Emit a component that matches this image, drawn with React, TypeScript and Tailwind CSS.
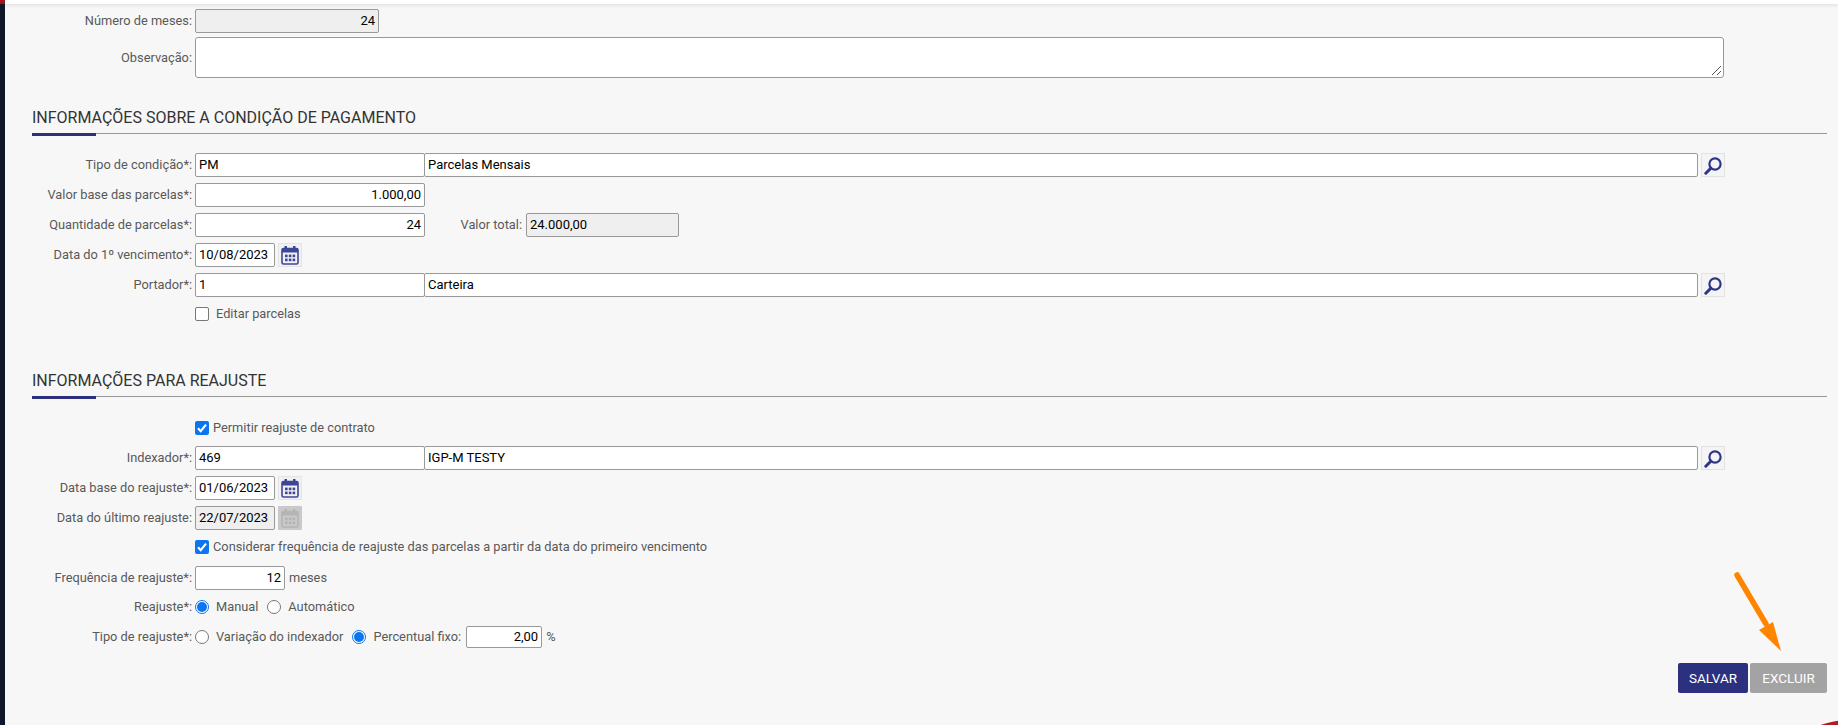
import React from "react";

const field = "border border-[#999] rounded-[2px] px-[3px] text-[13px] leading-[22px] text-black flex items-center shrink-0";
const on = field + " h-[24px] bg-white";
const off = field + " h-[24px] bg-[#efefef]";

function CalIcon({ disabled }: { disabled?: boolean }) {
  const c = disabled ? "#b4b4b4" : "#3f4697";
  return (
    <span className={disabled ? "ml-[3px] w-[24px] h-[24px] bg-[#c9c9c9] rounded-[1px] flex items-center justify-center shrink-0" : "ml-[3px] w-[24px] h-[24px] bg-[#f1f1f4] border border-[#e4e4e4] flex items-center justify-center shrink-0"}>
      <svg width="18" height="19" viewBox="0 0 18 19">
        <rect x="3.5" y="0" width="2.5" height="4" fill={c} />
        <rect x="12" y="0" width="2.5" height="4" fill={c} />
        <rect x="1" y="2.5" width="16" height="15.5" rx="1.5" fill="none" stroke={c} strokeWidth="1.6" />
        <rect x="1" y="2.5" width="16" height="4" fill={c} />
        {[4, 7.8, 11.6].map((x) =>
          [8.6, 12.6].map((y) => <rect key={x + "-" + y} x={x} y={y} width="2.6" height="2.6" fill={c} />)
        )}
      </svg>
    </span>
  );
}

function SearchIcon() {
  return (
    <span className="ml-[3px] w-[24px] h-[24px] bg-[#f4f4f6] border border-[#e2e2e2] flex items-center justify-center shrink-0">
      <svg width="20" height="20" viewBox="0 0 20 20" fill="none">
        <circle cx="12" cy="9" r="5.6" stroke="#2e3586" strokeWidth="2.2" />
        <path d="M7.8 13.2 L2.8 18.2" stroke="#2e3586" strokeWidth="3" strokeLinecap="round" />
      </svg>
    </span>
  );
}

function Label({ children }: { children: React.ReactNode }) {
  return <span className="w-[187px] shrink-0 mr-[3px] text-right text-[12.8px] text-[#595959] whitespace-nowrap">{children}</span>;
}

function Row({ label, children, className }: { label?: string; children: React.ReactNode; className?: string }) {
  return (
    <div className={"flex items-center " + (className ?? "h-[24px] mb-[6px]")}>
      <Label>{label}</Label>
      {children}
    </div>
  );
}

function Lookup({ code, text }: { code: string; text: string }) {
  return (
    <>
      <span className={on + " w-[230px]"}>{code}</span>
      <span className={on + " w-[1274px] ml-[-1px]"}>{text}</span>
      <SearchIcon />
    </>
  );
}

function Check({ checked }: { checked?: boolean }) {
  return checked ? (
    <span className="w-[14px] h-[14px] rounded-[2px] bg-[#0b76f0] flex items-center justify-center shrink-0">
      <svg width="12" height="12" viewBox="0 0 11 11" fill="none">
        <path d="M1.8 5.8 L4.3 8.4 L9.2 2.4" stroke="white" strokeWidth="2" />
      </svg>
    </span>
  ) : (
    <span className="w-[14px] h-[14px] rounded-[2px] bg-white border border-[#777] shrink-0" />
  );
}

function Radio({ checked, className }: { checked?: boolean; className?: string }) {
  return checked ? (
    <span className={"w-[14px] h-[14px] rounded-full border border-[#0b76f0] bg-white flex items-center justify-center shrink-0 " + (className ?? "")}>
      <span className="w-[10px] h-[10px] rounded-full bg-[#0b76f0]" />
    </span>
  ) : (
    <span className={"w-[14px] h-[14px] rounded-full border border-[#777] bg-white shrink-0 " + (className ?? "")} />
  );
}

function Heading({ children }: { children: React.ReactNode }) {
  return (
    <div className="ml-[27px] w-[1795px] h-[24px] border-b border-[#999] relative text-[16px] leading-[15px] text-[#333] uppercase">
      {children}
      <span className="absolute left-0 bottom-[-3px] w-[64px] h-[3px] bg-[#2b317f]" />
    </div>
  );
}

const txt = "text-[12.8px] text-[#595959]";

export default function App() {
  return (
    <div className="relative flex w-full h-[725px] overflow-hidden bg-[#f7f7f7] font-['Roboto',sans-serif]">
      <div className="w-[5px] shrink-0 bg-[#12162a] relative">
        <span className="absolute top-0 left-0 w-full h-[4px] bg-[#a01620]" />
      </div>
      <div className="flex-1 min-w-0">
        <div className="h-[4px] bg-white shadow-[0_1px_4px_rgba(0,0,0,0.12)]" />
        <div className="pt-[5px]">
          <Row label="Número de meses:" className="h-[24px] mb-[4px]">
            <span className={off + " w-[184px] justify-end"}>24</span>
          </Row>
          <Row label="Observação:" className="h-[41px]">
            <div className="relative w-[1529px] h-[41px] bg-white border border-[#999] rounded-[3px] shrink-0">
              <svg className="absolute right-[1px] bottom-[1px]" width="11" height="11" viewBox="0 0 11 11" stroke="#555" fill="none">
                <path d="M1 10 L10 1 M6 10 L10 6" />
              </svg>
            </div>
          </Row>
        </div>
        <div className="mt-[32px] mb-[19px]">
          <Heading>Informações sobre a condição de pagamento</Heading>
        </div>
        <Row label="Tipo de condição*:"><Lookup code="PM" text="Parcelas Mensais" /></Row>
        <Row label="Valor base das parcelas*:">
          <span className={on + " w-[230px] justify-end"}>1.000,00</span>
        </Row>
        <Row label="Quantidade de parcelas*:">
          <span className={on + " w-[230px] justify-end"}>24</span>
          <span className={txt + " w-[97px] text-right mr-[4px] shrink-0"}>Valor total:</span>
          <span className={off + " w-[153px]"}>24.000,00</span>
        </Row>
        <Row label="Data do 1º vencimento*:">
          <span className={on + " w-[80px]"}>10/08/2023</span>
          <CalIcon />
        </Row>
        <Row label="Portador*:"><Lookup code="1" text="Carteira" /></Row>
        <Row className="h-[14px] mt-[10px]">
          <Check />
          <span className={txt + " ml-[7px]"}>Editar parcelas</span>
        </Row>
        <div className="mt-[52px] mb-[24px]">
          <Heading>Informações para reajuste</Heading>
        </div>
        <Row className="h-[14px] mb-[11px]">
          <Check checked />
          <span className={txt + " ml-[4px]"}>Permitir reajuste de contrato</span>
        </Row>
        <Row label="Indexador*:"><Lookup code="469" text="IGP-M TESTY" /></Row>
        <Row label="Data base do reajuste*:">
          <span className={on + " w-[80px]"}>01/06/2023</span>
          <CalIcon />
        </Row>
        <Row label="Data do último reajuste:" className="h-[24px] mb-[10px]">
          <span className={off + " w-[80px]"}>22/07/2023</span>
          <CalIcon disabled />
        </Row>
        <Row className="h-[14px] mb-[12px]">
          <Check checked />
          <span className={txt + " ml-[4px]"}>Considerar frequência de reajuste das parcelas a partir da data do primeiro vencimento</span>
        </Row>
        <Row label="Frequência de reajuste*:" className="h-[24px] mb-[10px]">
          <span className={on + " w-[90px] justify-end"}>12</span>
          <span className={txt + " ml-[4px]"}>meses</span>
        </Row>
        <Row label="Reajuste*:" className="h-[14px] mb-[12px]">
          <Radio checked />
          <span className={txt + " ml-[7px]"}>Manual</span>
          <Radio className="ml-[9px]" />
          <span className={txt + " ml-[7px]"}>Automático</span>
        </Row>
        <Row label="Tipo de reajuste*:" className="h-[22px]">
          <Radio />
          <span className={txt + " ml-[7px]"}>Variação do indexador</span>
          <Radio checked className="ml-[9px]" />
          <span className={txt + " ml-[7px]"}>Percentual fixo:</span>
          <span className={field + " h-[22px] bg-white w-[76px] ml-[5px] justify-end"}>2,00</span>
          <span className={txt + " ml-[4px]"}>%</span>
        </Row>
        <div className="flex justify-end gap-[2px] w-[1822px] mt-[15px]">
          <button className="w-[70px] h-[30px] rounded-[2px] bg-[#2b317f] text-white text-[13.5px]">SALVAR</button>
          <button className="w-[77px] h-[30px] rounded-[2px] bg-[#a3a3a3] text-white text-[13.5px]">EXCLUIR</button>
        </div>
      </div>
      <svg className="absolute left-[1727px] top-[566px]" width="56" height="88" viewBox="0 0 56 88" fill="none">
        <path d="M10 9 L39 58" stroke="#ff8400" strokeWidth="5.5" strokeLinecap="round" />
        <path d="M32 64 L46 56 L54 85 Z" fill="#ff8400" />
      </svg>
      <span className="absolute left-[1760px] top-[720px] w-[180px] h-[180px] rounded-full bg-[#b01c22]" />
    </div>
  );
}
